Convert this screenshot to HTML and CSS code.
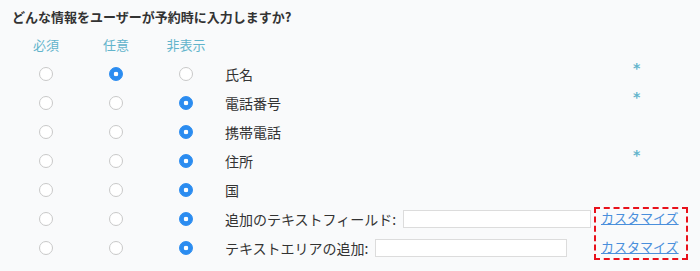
FILE: index.html
```html
<!DOCTYPE html>
<html lang="ja">
<head>
<meta charset="utf-8">
<title>予約フォーム項目</title>
<link rel="stylesheet" href="styles.css">
</head>
<body>
<div class="page">
  <h2 class="title">どんな情報をユーザーが予約時に入力しますか?</h2>
  <div class="table">
    <div class="head">必須</div>
    <div class="head">任意</div>
    <div class="head">非表示</div>
    <div class="blank"></div>
    <div class="blank"></div>

    <div class="cell"><input type="radio" name="r1"></div>
    <div class="cell"><input type="radio" name="r1" checked></div>
    <div class="cell"><input type="radio" name="r1"></div>
    <div class="label">氏名</div>
    <div class="aside"><span class="star">*</span></div>

    <div class="cell"><input type="radio" name="r2"></div>
    <div class="cell"><input type="radio" name="r2"></div>
    <div class="cell"><input type="radio" name="r2" checked></div>
    <div class="label">電話番号</div>
    <div class="aside"><span class="star">*</span></div>

    <div class="cell"><input type="radio" name="r3"></div>
    <div class="cell"><input type="radio" name="r3"></div>
    <div class="cell"><input type="radio" name="r3" checked></div>
    <div class="label">携帯電話</div>
    <div class="aside"></div>

    <div class="cell"><input type="radio" name="r4"></div>
    <div class="cell"><input type="radio" name="r4"></div>
    <div class="cell"><input type="radio" name="r4" checked></div>
    <div class="label">住所</div>
    <div class="aside"><span class="star">*</span></div>

    <div class="cell"><input type="radio" name="r5"></div>
    <div class="cell"><input type="radio" name="r5"></div>
    <div class="cell"><input type="radio" name="r5" checked></div>
    <div class="label">国</div>
    <div class="aside"></div>

    <div class="cell"><input type="radio" name="r6"></div>
    <div class="cell"><input type="radio" name="r6"></div>
    <div class="cell"><input type="radio" name="r6" checked></div>
    <div class="label">追加のテキストフィールド: <input type="text" class="field field-a"></div>

    <div class="custom">
      <a href="#" class="link">カスタマイズ</a>
      <a href="#" class="link">カスタマイズ</a>
    </div>

    <div class="cell"><input type="radio" name="r7"></div>
    <div class="cell"><input type="radio" name="r7"></div>
    <div class="cell"><input type="radio" name="r7" checked></div>
    <div class="label">テキストエリアの追加: <input type="text" class="field field-b"></div>
  </div>
</div>
</body>
</html>
```

FILE: styles.css
```css
html, body {
  margin: 0;
  padding: 0;
  background: #f9fafb;
}

body {
  font-family: "Noto Sans CJK JP", "Noto Sans", sans-serif;
  color: #333;
}

.page {
  width: 700px;
  height: 271px;
  overflow: hidden;
}

.title {
  margin: 0 0 4px 0;
  padding: 8px 0 0 12px;
  font-size: 13px;
  line-height: 18px;
  font-weight: bold;
  color: #333;
}

.table {
  display: grid;
  grid-template-columns: 70px 70px 70px 1fr 94px;
  grid-auto-rows: 29px;
  padding: 0 12px 0 11px;
}

.head {
  display: flex;
  align-items: center;
  justify-content: center;
  font-size: 13px;
  color: #62b4cb;
}

.cell {
  display: flex;
  align-items: center;
  justify-content: center;
}

.label {
  display: flex;
  align-items: center;
  padding-left: 4px;
  font-size: 14px;
  color: #333;
  white-space: nowrap;
}

.aside {
  position: relative;
}

.star {
  position: absolute;
  left: 39px;
  top: 2px;
  font-family: "DejaVu Sans", sans-serif;
  font-size: 14px;
  line-height: 14px;
  font-weight: bold;
  color: #62b4cb;
}

input[type="radio"] {
  appearance: none;
  -webkit-appearance: none;
  margin: 0;
  width: 14px;
  height: 14px;
  border-radius: 50%;
  border: 1px solid #c9c9c9;
  background: #fff;
  box-sizing: border-box;
}

input[type="radio"]:checked {
  border-color: #2b8cf0;
  background: radial-gradient(circle, #fff 0 2px, #2b8cf0 2.6px);
}

.field {
  box-sizing: border-box;
  height: 18px;
  margin: 0 0 0 7px;
  padding: 0 4px;
  border: 1px solid #dcdcdc;
  border-radius: 0;
  background: #fff;
  font-size: 12px;
}

.field-a {
  width: 188px;
}

.field-b {
  width: 192px;
}

.custom {
  grid-column: 5;
  grid-row: span 2;
  margin: 3px 0 2px 0;
  border: 2px dashed #e8111b;
  display: flex;
  flex-direction: column;
  gap: 11px;
  padding-left: 5px;
}

.link {
  font-size: 13px;
  line-height: 18px;
  color: #4a8fdc;
  text-decoration: underline;
}
```
